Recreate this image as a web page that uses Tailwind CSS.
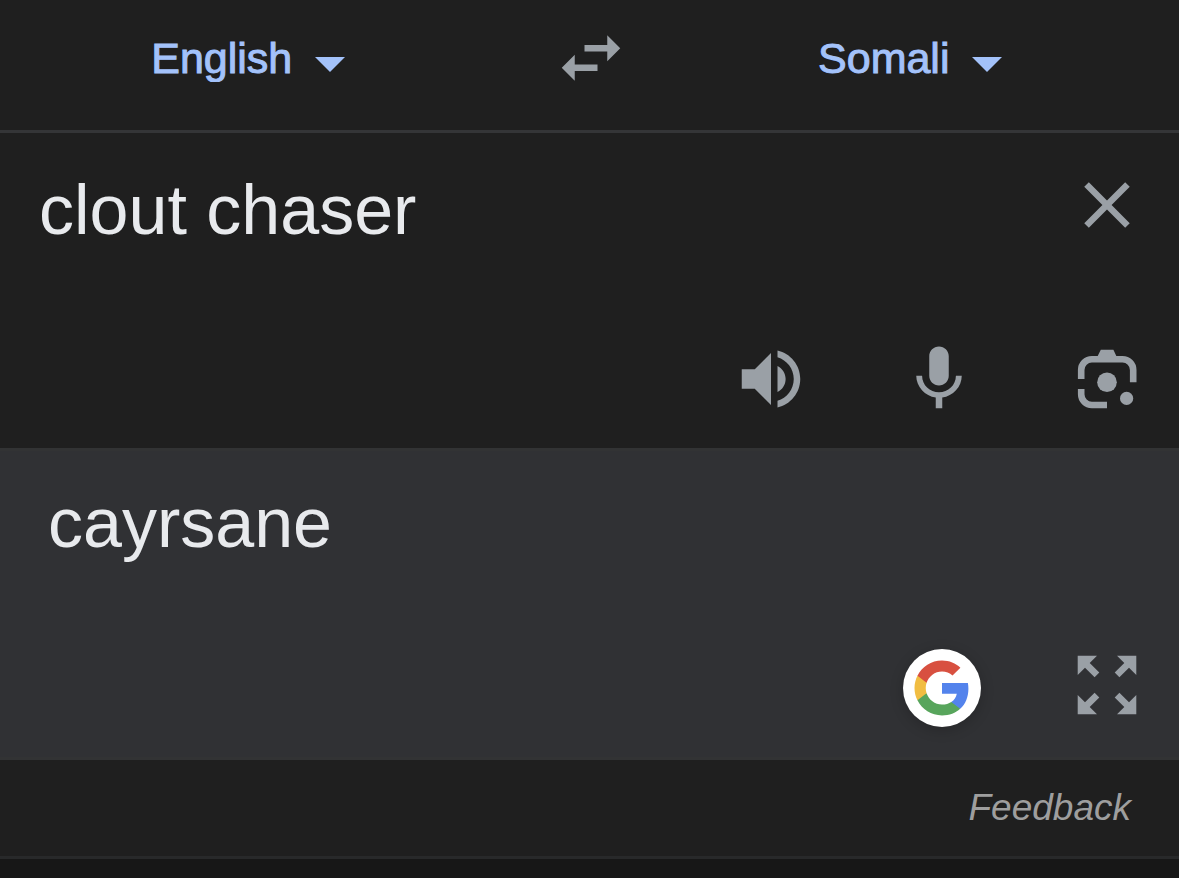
<!DOCTYPE html>
<html lang="en">
<head>
    <meta charset="UTF-8">
    <meta name="viewport" content="width=device-width, initial-scale=1.0">
    <title>Translate</title>
    <script src="https://cdn.jsdelivr.net/npm/@tailwindcss/browser@4"></script>
</head>
<body class="bg-[#171717] min-h-screen font-['Liberation_Sans',Arial,sans-serif] text-[#e8eaed]">

    <main class="bg-[#1f1f1f] border-b-3 border-[#28292a]">

        <!-- Language bar -->
        <header class="grid grid-cols-[1fr_auto_1fr] items-center pt-[19px] pb-[33px] border-b-3 border-[#343537] text-[#a3c2fa]">
            <div class="flex justify-center items-center gap-[23px] pr-[53px]">
                <select id="source" aria-label="Source language" class="appearance-none field-sizing-content bg-transparent text-[43px] leading-[48px] [-webkit-text-stroke:1px_#a3c2fa]">
                    <option>English</option>
                </select>
                <svg class="w-[30px] h-[15px] mt-3" viewBox="0 0 30 15" fill="currentColor"><path d="M0 0h30L15 15z"/></svg>
            </div>

            <button id="swap" type="button" aria-label="Swap languages" class="pl-[2px] text-[#9aa0a6]">
                <svg class="w-[78px] h-[78px]" viewBox="0 0 24 24" fill="currentColor"><path d="M21 9l-4-4v3h-7v2h7v3zM7 11l-4 4 4 4v-3h7v-2H7z"/></svg>
            </button>

            <div class="flex justify-center items-center gap-[23px] pl-3">
                <select id="target" aria-label="Target language" class="appearance-none field-sizing-content bg-transparent text-[43px] leading-[48px] [-webkit-text-stroke:1px_#a3c2fa]">
                    <option>Somali</option>
                </select>
                <svg class="w-[30px] h-[15px] mt-3" viewBox="0 0 30 15" fill="currentColor"><path d="M0 0h30L15 15z"/></svg>
            </div>
        </header>

        <!-- Source text -->
        <section class="flex flex-col justify-between min-h-[315px] pt-[33px] pb-[30px] pl-[39px] pr-[33px]">
            <div class="flex items-start">
                <input id="text" type="text" aria-label="Text to translate" value="clout chaser" class="flex-1 min-w-0 mt-1 h-20 bg-transparent text-[70px] leading-[80px] outline-none">
                <button id="clear" type="button" aria-label="Clear text" class="text-[#9aa0a6]">
                    <svg class="w-[78px] h-[78px]" viewBox="0 0 24 24" fill="currentColor"><path d="M19 6.41L17.59 5 12 10.59 6.41 5 5 6.41 10.59 12 5 17.59 6.41 19 12 13.41 17.59 19 19 17.59 13.41 12z"/></svg>
                </button>
            </div>
            <div class="flex justify-end gap-[90px] text-[#9aa0a6]">
                <button type="button" aria-label="Listen">
                    <svg class="w-[78px] h-[78px]" viewBox="0 0 24 24" fill="currentColor"><path d="M3 9v6h4l5 5V4L7 9H3zm13.5 3c0-1.77-1.02-3.29-2.5-4.03v8.05c1.48-.73 2.5-2.25 2.5-4.02zM14 3.23v2.06c2.89.86 5 3.54 5 6.71s-2.11 5.85-5 6.71v2.06c4.01-.91 7-4.49 7-8.77s-2.99-7.86-7-8.77z"/></svg>
                </button>
                <button type="button" aria-label="Speak">
                    <svg class="w-[78px] h-[78px]" viewBox="0 0 24 24" fill="currentColor"><path d="M12 14c1.66 0 3-1.34 3-3V5c0-1.66-1.34-3-3-3S9 3.34 9 5v6c0 1.66 1.34 3 3 3zm5.2-3c0 2.9-2.4 5.1-5.2 5.1S6.8 13.9 6.8 11H5c0 3.41 2.72 6.23 6 6.72V21h2v-3.28c3.28-.48 6-3.3 6-6.72z"/></svg>
                </button>
                <button type="button" aria-label="Translate with camera">
                    <svg class="w-[78px] h-[78px]" viewBox="0 0 78 78" fill="none">
                        <path d="M13.2 39V30a10.7 10.7 0 0 1 10.7-10.7H54.5A10.7 10.7 0 0 1 65.2 30V42.3M13.2 49v5.3A10.7 10.7 0 0 0 23.9 65H39" stroke="currentColor" stroke-width="6.6"/>
                        <path d="M29.2 17l3.6-7.3h12.6l3.4 7.3z" fill="currentColor"/>
                        <circle cx="39" cy="42.3" r="9.8" fill="currentColor"/>
                        <circle cx="58.6" cy="58.4" r="6.6" fill="currentColor"/>
                    </svg>
                </button>
            </div>
        </section>

        <!-- Translation -->
        <section class="relative flex flex-col justify-between min-h-[312px] pt-8 pb-[33px] pl-12 pr-[33px] bg-[#303134] border-y-3 border-[#323334]">
            <p class="text-[70px] leading-[80px]">cayrsane</p>
            <button type="button" aria-label="Full screen" class="self-end text-[#9aa0a6]">
                <svg class="w-[78px] h-[78px]" viewBox="0 0 78 78" fill="currentColor">
                    <path d="M9.7 9.7H29l-7.3 7.3 9.6 9.6-4.7 4.7-9.6-9.6L9.7 29z"/>
                    <path d="M68.3 9.7H49l7.3 7.3-9.6 9.6 4.7 4.7 9.6-9.6 7.3 7.3z"/>
                    <path d="M9.7 68.3H29l-7.3-7.3 9.6-9.6-4.7-4.7-9.6 9.6L9.7 49z"/>
                    <path d="M68.3 68.3H49l7.3-7.3-9.6-9.6 4.7-4.7 9.6 9.6 7.3-7.3z"/>
                </svg>
            </button>

            <!-- Floating search badge -->
            <a href="#" aria-label="Search with Google" class="absolute right-[198px] bottom-[30px] flex justify-center items-center w-[78px] h-[78px] rounded-full bg-white shadow-[0_3px_14px_rgba(0,0,0,0.2)]">
                <svg class="w-[60px] h-[60px]" viewBox="0 0 24 24">
                    <path fill="#5383ec" d="M22.56 12.25c0-.78-.07-1.53-.2-2.25H12v4.26h5.92c-.26 1.37-1.04 2.53-2.21 3.31v2.77h3.57c2.08-1.92 3.28-4.74 3.28-8.09z"/>
                    <path fill="#58a55c" d="M12 23c2.97 0 5.46-.98 7.28-2.66l-3.57-2.77c-.98.66-2.23 1.06-3.71 1.06-2.86 0-5.29-1.93-6.16-4.53H2.18v2.84C3.99 20.53 7.7 23 12 23z"/>
                    <path fill="#f1bd42" d="M5.84 14.09c-.22-.66-.35-1.36-.35-2.09s.13-1.43.35-2.09V7.07H2.18C1.43 8.55 1 10.22 1 12s.43 3.45 1.18 4.93l2.85-2.22.81-.62z"/>
                    <path fill="#d85040" d="M12 5.38c1.62 0 3.06.56 4.21 1.64l3.15-3.15C17.45 2.09 14.97 1 12 1 7.7 1 3.99 3.47 2.18 7.07l3.66 2.84c.87-2.6 3.3-4.53 6.16-4.53z"/>
                </svg>
            </a>
        </section>

        <footer class="flex justify-end items-center h-24 px-12">
            <a href="#" class="text-[37px] leading-[48px] italic text-[#9e9e9e]">Feedback</a>
        </footer>
    </main>

    <script>
        const source = document.getElementById("source");
        const target = document.getElementById("target");
        const text = document.getElementById("text");

        document.getElementById("swap").addEventListener("click", function () {
            const from = source.options[0].textContent;
            source.options[0].textContent = target.options[0].textContent;
            target.options[0].textContent = from;
        });

        document.getElementById("clear").addEventListener("click", function () {
            text.value = "";
            text.focus();
        });
    </script>
</body>
</html>
